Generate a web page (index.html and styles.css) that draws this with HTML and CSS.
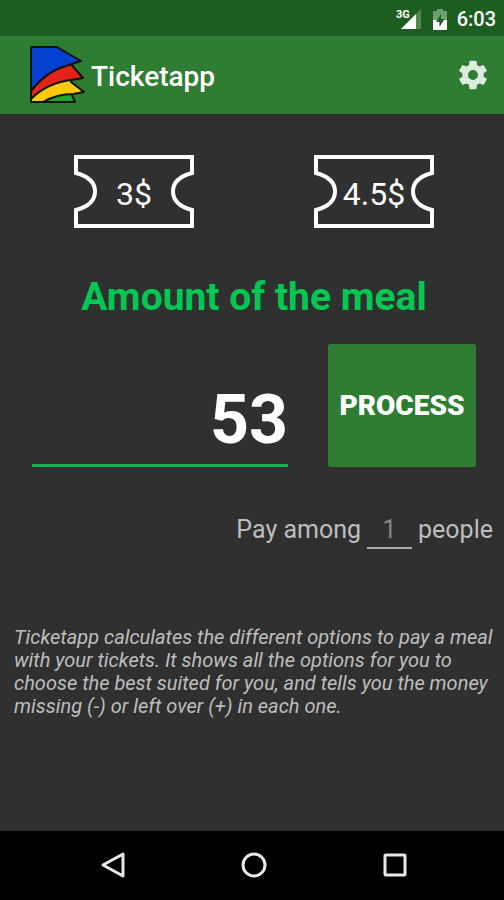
FILE: index.html
```html
<!DOCTYPE html>
<html lang="en">
<head>
<meta charset="utf-8">
<meta name="viewport" content="width=device-width, initial-scale=1">
<title>Ticketapp</title>
<link rel="stylesheet" href="styles.css">
</head>
<body>
<div class="status">
  <svg class="signal" viewBox="0 0 26 22" aria-hidden="true">
    <path d="M25 1v20H5z" fill="#4f8a52"/>
    <path d="M20 6v15H5z" fill="#fff"/>
    <text class="signal-label" x="0" y="10">3G</text>
  </svg>
  <svg class="battery" viewBox="0 0 14 21" aria-hidden="true">
    <path d="M4 0h6v2h3q1 0 1 1v8H0V3q0-1 1-1h3z" fill="#6fa071"/>
    <path d="M0 11h14v9q0 1-1 1H1q-1 0-1-1z" fill="#fff"/>
    <path d="M8 5 3 13h3.500v5L11.500 10H8z" fill="#1b5e20"/>
  </svg>
  <span class="clock">6:03</span>
</div>
<header class="appbar">
  <svg class="logo" viewBox="0 0 56 60" aria-hidden="true">
    <g stroke="#0a140a" stroke-width="2" stroke-linejoin="round">
      <path d="M12 57Q28 48 42 48L46 57z" fill="#1fa62c"/>
      <path d="M2 57V52Q18 37 43 33L42 37 55 47 44 49Q28 49 14 57z" fill="#ffc80a"/>
      <path d="M2 52V46Q18 25 41 18L54 33 42 35Q18 38 2 54z" fill="#e2231a"/>
      <path d="M2 2H28L52 16 40 20Q17 26 2 46z" fill="#0440d0"/>
      <path d="M2 2v55h44" fill="none"/>
    </g>
  </svg>
  <h1 class="title">Ticketapp</h1>
  <button class="settings" type="button" aria-label="Settings">
    <svg viewBox="0 0 24 24" aria-hidden="true"><path fill="#dcecdd" d="M19.430 12.980c.04-.32.07-.64.07-.98s-.03-.66-.07-.98l2.110-1.650c.19-.15.24-.42.12-.64l-2-3.460c-.12-.22-.39-.3-.61-.22l-2.490 1c-.52-.4-1.080-.73-1.690-.98l-.38-2.650C14.460 2.180 14.250 2 14 2h-4c-.25 0-.46.18-.49.42l-.38 2.650c-.61.25-1.170.59-1.690.98l-2.490-1c-.23-.09-.49 0-.61.22l-2 3.460c-.13.22-.07.49.12.64l2.110 1.650c-.04.32-.07.65-.07.98s.03.66.07.98l-2.110 1.650c-.19.15-.24.42-.12.64l2 3.460c.12.22.39.3.61.22l2.490-1c.52.4 1.080.73 1.690.98l.38 2.650c.03.24.24.42.49.42h4c.25 0 .46-.18.49-.42l.38-2.650c.61-.25 1.170-.59 1.690-.98l2.490 1c.23.09.49 0 .61-.22l2-3.460c.12-.22.07-.49-.12-.64l-2.110-1.650zM12 15.500c-1.930 0-3.500-1.570-3.500-3.500s1.570-3.500 3.500-3.500 3.500 1.570 3.500 3.500-1.570 3.500-3.500 3.500z"/></svg>
  </button>
</header>
<main class="content">
  <div class="tickets">
    <button class="ticket" type="button">
      <svg class="ticket-shape" viewBox="0 0 120 73" aria-hidden="true"><path d="M2 2H118V18Q99 23 99 36.500T118 55V71H2V55Q21 50 21 36.500T2 18z"/></svg>
      <span class="ticket-value">3$</span>
    </button>
    <button class="ticket" type="button">
      <svg class="ticket-shape" viewBox="0 0 120 73" aria-hidden="true"><path d="M2 2H118V18Q99 23 99 36.500T118 55V71H2V55Q21 50 21 36.500T2 18z"/></svg>
      <span class="ticket-value">4.5$</span>
    </button>
  </div>
  <form class="form">
    <label class="heading" for="amount">Amount of the meal</label>
    <div class="entry">
      <input class="amount" id="amount" type="text" inputmode="decimal" value="53">
      <button class="process" type="button">PROCESS</button>
    </div>
    <div class="split">
      <label for="people">Pay among</label>
      <input class="people" id="people" type="text" inputmode="numeric" placeholder="1">
      <span>people</span>
    </div>
  </form>
  <p class="about">Ticketapp calculates the different options to pay a meal with your tickets. It shows all the options for you to choose the best suited for you, and tells you the money missing (-) or left over (+) in each one.</p>
</main>
<nav class="navbar">
  <button type="button" aria-label="Back"><svg viewBox="0 0 28 28" aria-hidden="true"><path d="M24 3V25L4 14z"/></svg></button>
  <button type="button" aria-label="Home"><svg viewBox="0 0 28 28" aria-hidden="true"><circle cx="14" cy="14" r="11"/></svg></button>
  <button type="button" aria-label="Recents"><svg viewBox="0 0 28 28" aria-hidden="true"><rect x="4" y="4" width="20" height="20" rx="1"/></svg></button>
</nav>
</body>
</html>
```
FILE: styles.css
```css
* {
  box-sizing: border-box;
}

body {
  margin: 0;
  min-height: 100vh;
  display: flex;
  flex-direction: column;
  background: #303030;
  color: #fff;
  font-family: Roboto, "Liberation Sans", sans-serif;
}

button,
input {
  margin: 0;
  padding: 0;
  border: 0;
  background: none;
  color: inherit;
  font: inherit;
}

svg {
  display: block;
}

.status {
  display: flex;
  align-items: center;
  justify-content: flex-end;
  height: 36px;
  padding: 2px 8px 0;
  background: #1b5e20;
}

.signal {
  width: 26px;
  height: 22px;
}

.signal-label {
  fill: #fff;
  font-size: 11px;
  font-weight: 700;
}

.battery {
  width: 14px;
  height: 21px;
  margin: 0 10px 0 11px;
}

.clock {
  font-size: 20px;
  font-weight: 500;
  line-height: 24px;
}

.appbar {
  display: flex;
  align-items: center;
  height: 78px;
  padding: 0 14px 0 29px;
  background: #2e7d32;
}

.logo {
  width: 56px;
  height: 60px;
}

.title {
  flex: 1;
  margin: 0;
  padding: 4px 0 0 6px;
  font-size: 28px;
  font-weight: 500;
  line-height: 32px;
}

.settings svg {
  width: 34px;
  height: 34px;
}

.content {
  flex: 1;
  padding: 41px 10px 0 14px;
}

.tickets {
  display: grid;
  grid-template-columns: 1fr 1fr;
  justify-items: center;
}

.ticket {
  display: grid;
  place-items: center;
}

.ticket-shape,
.ticket-value {
  grid-area: 1 / 1;
}

.ticket-shape {
  width: 120px;
  height: 73px;
  fill: none;
  stroke: #fff;
  stroke-width: 4;
}

.ticket-value {
  padding-top: 4px;
  font-size: 32px;
  line-height: 40px;
}

.heading {
  display: block;
  margin-top: 45px;
  color: #00c853;
  font-size: 39px;
  font-weight: 700;
  line-height: 48px;
  text-align: center;
}

.entry {
  display: flex;
  align-items: flex-end;
  gap: 40px;
  margin: 23px 18px 0;
}

.amount {
  flex: 1;
  min-width: 0;
  height: 92px;
  border-bottom: 3px solid #0fb552;
  font-size: 68px;
  font-weight: 700;
  text-align: right;
}

.process {
  width: 148px;
  height: 123px;
  border-radius: 3px;
  background: #2e7d32;
  font-size: 28px;
  font-weight: 900;
}

.split {
  display: flex;
  align-items: center;
  justify-content: flex-end;
  gap: 6px;
  margin-top: 44px;
  padding-right: 1px;
  color: #bebebe;
  font-size: 25px;
  line-height: 36px;
}

.people {
  width: 45px;
  height: 38px;
  border-bottom: 2px solid #aaa;
  text-align: center;
}

.people::placeholder {
  color: #858585;
  opacity: 1;
}

.about {
  margin: 77px 0 0;
  color: #bebebe;
  font-size: 20px;
  font-style: italic;
  line-height: 23px;
}

.navbar {
  display: flex;
  align-items: center;
  justify-content: space-between;
  height: 69px;
  padding: 0 95px 2px 99px;
  background: #000;
}

.navbar svg {
  width: 28px;
  height: 28px;
  fill: none;
  stroke: #e8e8e8;
  stroke-width: 3;
  stroke-linejoin: round;
}
```
